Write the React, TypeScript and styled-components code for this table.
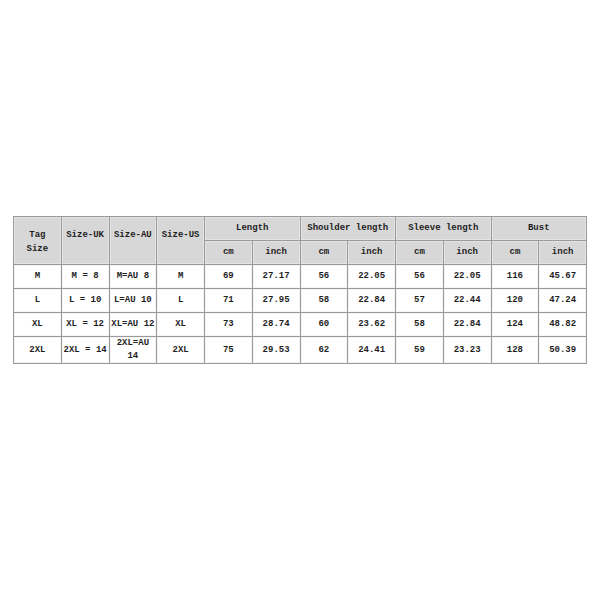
import React from 'react';
import styled, { createGlobalStyle } from 'styled-components';

const GlobalStyle = createGlobalStyle`
  html, body {
    margin: 0;
    padding: 0;
    background: #ffffff;
  }
`;

const Page = styled.div`
  width: 600px;
  height: 600px;
  box-sizing: border-box;
  padding: 216px 14px 0 13px;
  background: #ffffff;
`;

const Table = styled.table`
  width: 573px;
  table-layout: fixed;
  border-collapse: collapse;
  font-family: "Liberation Mono", "DejaVu Sans Mono", monospace;
  font-size: 9px;
  font-weight: bold;
  color: #1e1e1e;
`;

const Cell = styled.td<{ $head?: boolean }>`
  height: 23px;
  padding: 0 1px;
  border: 1px solid #9a9a9a;
  box-shadow: inset 0 0 0 1px ${(p) => (p.$head ? '#e4e4e4' : '#f4f4f4')};
  background: ${(p) => (p.$head ? '#d7d7d7' : '#ffffff')};
  text-align: center;
  vertical-align: middle;
  line-height: 13px;
  word-break: normal;
`;

// the tall size headers sit near the top of their two-row cell
const SizeHead = styled(Cell)`
  vertical-align: top;
  padding-top: 11px;
  line-height: 14px;
`;

const groups = ['Length', 'Shoulder length', 'Sleeve length', 'Bust'];

const rows = [
  ['M', 'M = 8', 'M=AU 8', 'M', '69', '27.17', '56', '22.05', '56', '22.05', '116', '45.67'],
  ['L', 'L = 10', 'L=AU 10', 'L', '71', '27.95', '58', '22.84', '57', '22.44', '120', '47.24'],
  ['XL', 'XL = 12', 'XL=AU 12', 'XL', '73', '28.74', '60', '23.62', '58', '22.84', '124', '48.82'],
  ['2XL', '2XL = 14', '2XL=AU 14', '2XL', '75', '29.53', '62', '24.41', '59', '23.23', '128', '50.39'],
];

const App: React.FC = () => {
  return (
    <Page>
      <GlobalStyle />
      <Table>
        <colgroup>
          {Array.from({ length: 12 }).map((_, i) => (
            <col key={i} style={{ width: 573 / 12 }} />
          ))}
        </colgroup>
        <tbody>
          <tr>
            <SizeHead $head rowSpan={2}>Tag<br />Size</SizeHead>
            <SizeHead $head rowSpan={2}>Size-UK</SizeHead>
            <SizeHead $head rowSpan={2}>Size-AU</SizeHead>
            <SizeHead $head rowSpan={2}>Size-US</SizeHead>
            {groups.map((g) => (
              <Cell $head colSpan={2} key={g}>{g}</Cell>
            ))}
          </tr>
          <tr>
            {groups.map((g) => (
              <React.Fragment key={g}>
                <Cell $head>cm</Cell>
                <Cell $head>inch</Cell>
              </React.Fragment>
            ))}
          </tr>
          {rows.map((r) => (
            <tr key={r[0]}>
              {r.map((v, i) => (
                <Cell key={i}>{v}</Cell>
              ))}
            </tr>
          ))}
        </tbody>
      </Table>
    </Page>
  );
};

export default App;
